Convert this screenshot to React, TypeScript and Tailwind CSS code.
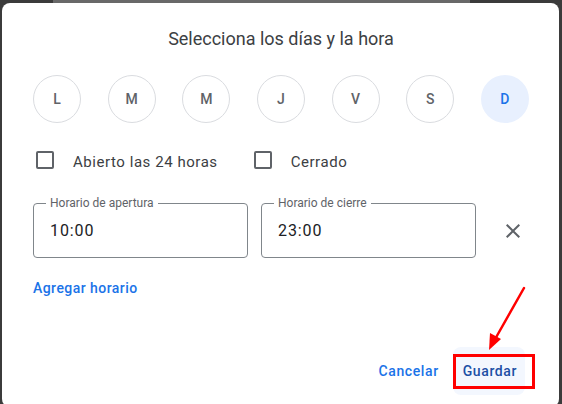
import { useState } from "react";

const days = ["L", "M", "M", "J", "V", "S", "D"];

function Checkbox({ label }: { label: string }) {
  return (
    <label className="flex items-start">
      <span className="mt-[3px] w-[18px] h-[18px] border-2 border-[#5f6368] rounded-[2px]" />
      <span className="ml-[19px] pt-[2px] text-[15px] leading-[24px] tracking-[0.55px] text-[#3c4043]">{label}</span>
    </label>
  );
}

function TimeField({ label, value }: { label: string; value: string }) {
  return (
    <div className="relative w-[215px] h-[55px] border border-[#80868b] rounded-[4px] flex items-center px-[16px]">
      <span className="absolute -top-[9px] left-[12px] px-[4px] bg-white text-[12px] leading-[16px] text-[#5f6368]">
        {label}
      </span>
      <span className="text-[16px] tracking-[0.9px] text-[#202124]">{value}</span>
    </div>
  );
}

export default function App() {
  const [selected] = useState(6);

  return (
    <div
      className="w-[562px] h-[404px] overflow-hidden bg-[#3b3b3b]"
      style={{ fontFamily: "Roboto, 'Liberation Sans', sans-serif" }}
    >
      {/* top strip of the page behind the dialog */}
      <div className="h-[3px] flex">
        <div className="ml-[53px] w-[417px] bg-[#686868]" />
      </div>

      <div className="relative ml-[2px] w-[557px] h-[404px] bg-white rounded-lg pt-[24px] pl-[31px] pr-[28px]">
        <h1 className="text-center text-[18px] leading-[24px] text-[#3c4043] pr-[2px]">
          Selecciona los días y la hora
        </h1>

        {/* days */}
        <div className="mt-[24px] flex justify-between pr-[2px]">
          {days.map((d, i) => (
            <div
              key={i}
              className={
                i === selected
                  ? "w-[48px] h-[48px] rounded-full bg-[#e8f0fe] flex items-center justify-center text-[14px] font-medium text-[#1a73e8]"
                  : "w-[48px] h-[48px] rounded-full border border-[#dadce0] flex items-center justify-center text-[14px] font-medium text-[#5f6368]"
              }
            >
              {d}
            </div>
          ))}
        </div>

        {/* checkboxes */}
        <div className="mt-[25px] flex items-start pl-[3px]">
          <Checkbox label="Abierto las 24 horas" />
          <div className="ml-[36px]">
            <Checkbox label="Cerrado" />
          </div>
        </div>

        {/* time fields */}
        <div className="mt-[29px] flex items-center">
          <TimeField label="Horario de apertura" value="10:00" />
          <div className="ml-[13px]">
            <TimeField label="Horario de cierre" value="23:00" />
          </div>
          <svg className="ml-[25px]" width="24" height="24" viewBox="0 0 24 24" fill="#5f6368">
            <path d="M19 6.41L17.59 5 12 10.59 6.41 5 5 6.41 10.59 12 5 17.59 6.41 19 12 13.41 17.59 19 19 17.59 13.41 12z" />
          </svg>
        </div>

        <div className="mt-[20px] text-[14px] leading-[20px] font-medium tracking-[0.45px] text-[#1a73e8]">
          Agregar horario
        </div>

        {/* actions */}
        <div className="mt-[49px] flex justify-end items-center pr-[6px]">
          <button className="h-[48px] px-[10px] rounded-lg text-[14px] font-medium tracking-[0.6px] text-[#1a73e8]">
            Cancelar
          </button>
          <button className="ml-[4px] h-[48px] pl-[10px] pr-[8px] rounded-lg bg-[#f3f7fe] text-[14px] font-medium tracking-[0.6px] text-[#1c4fa5]">
            Guardar
          </button>
        </div>

        {/* annotation: red box and arrow */}
        <div className="absolute left-[451px] top-[351px] w-[82px] h-[35px] border-[3px] border-[#ff0000]" />
        <svg className="absolute left-[476px] top-[280px]" width="60" height="72" viewBox="0 0 60 72">
          <line x1="46" y1="5" x2="16" y2="58" stroke="#ff0000" strokeWidth="2.5" strokeLinecap="round" />
          <polygon points="11,67 12,50 23,56" fill="#ff0000" />
        </svg>
      </div>
    </div>
  );
}
